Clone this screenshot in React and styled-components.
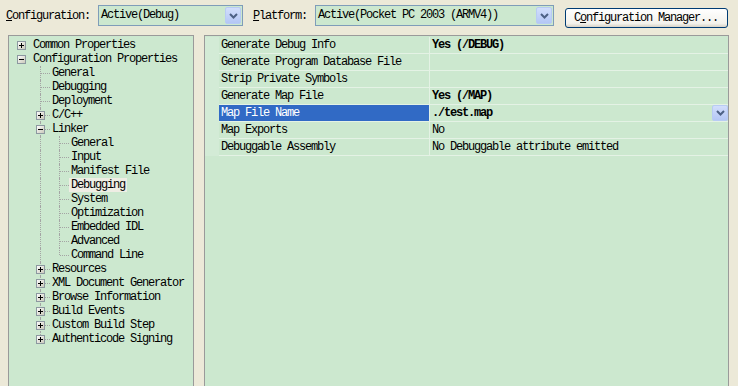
import React from 'react'
import styled, { createGlobalStyle, css } from 'styled-components'

const GlobalStyle = createGlobalStyle`
  html, body { margin: 0; padding: 0; background: #ece9d8; }
  body {
    font-family: "Liberation Mono", "DejaVu Sans Mono", monospace;
    font-size: 12px;
    letter-spacing: -1.2px;
    color: #000;
  }
`

const TREE = [
  { label: 'Common Properties', kids: [] },
  {
    label: 'Configuration Properties',
    open: true,
    kids: [
      { label: 'General' },
      { label: 'Debugging' },
      { label: 'Deployment' },
      { label: 'C/C++', kids: [] },
      {
        label: 'Linker',
        open: true,
        kids: [
          { label: 'General' },
          { label: 'Input' },
          { label: 'Manifest File' },
          { label: 'Debugging', selected: true },
          { label: 'System' },
          { label: 'Optimization' },
          { label: 'Embedded IDL' },
          { label: 'Advanced' },
          { label: 'Command Line' }
        ]
      },
      { label: 'Resources', kids: [] },
      { label: 'XML Document Generator', kids: [] },
      { label: 'Browse Information', kids: [] },
      { label: 'Build Events', kids: [] },
      { label: 'Custom Build Step', kids: [] },
      { label: 'Authenticode Signing', kids: [] }
    ]
  }
]

const PROPS = [
  { name: 'Generate Debug Info', value: 'Yes (/DEBUG)', bold: true },
  { name: 'Generate Program Database File', value: '' },
  { name: 'Strip Private Symbols', value: '' },
  { name: 'Generate Map File', value: 'Yes (/MAP)', bold: true },
  { name: 'Map File Name', value: './test.map', bold: true, selected: true },
  { name: 'Map Exports', value: 'No' },
  { name: 'Debuggable Assembly', value: 'No Debuggable attribute emitted' }
]

function flatten (nodes, level, guides, out = []) {
  nodes.forEach((node, i) => {
    const last = i === nodes.length - 1
    out.push({
      label: node.label,
      level,
      last,
      guides,
      selected: node.selected,
      expander: node.kids ? (node.open ? 'minus' : 'plus') : null
    })
    if (node.open) flatten(node.kids, level + 1, [...guides, level > 0 && !last], out)
  })
  return out
}

const Window = styled.div`
  width: 738px;
  height: 386px;
  overflow: hidden;
  background: #ece9d8;
  display: flex;
  flex-direction: column;
`
const Toolbar = styled.div`
  height: 35px;
  flex-shrink: 0;
  box-sizing: border-box;
  display: flex;
  align-items: flex-start;
  padding: 5px 0 0 6px;
`
const FieldLabel = styled.span`
  margin-top: 4px;
  margin-right: ${p => p.$gap}px;
  line-height: 14px;
  white-space: nowrap;
  u { text-decoration: underline; }
`
const Combo = styled.div`
  width: ${p => p.$width}px;
  height: 21px;
  box-sizing: border-box;
  border: 1px solid #7f9db9;
  background: #cce8cf;
  display: flex;
  align-items: stretch;
  margin-right: ${p => p.$after || 0}px;
`
const ComboText = styled.span`
  flex: 1;
  padding-left: 2px;
  line-height: 19px;
  white-space: nowrap;
  overflow: hidden;
`
const DropButton = styled.span`
  width: ${p => p.$w || 16}px;
  height: ${p => p.$h || 17}px;
  margin: ${p => p.$m ?? 1}px;
  box-sizing: border-box;
  border: 1px solid #b8cbf4;
  border-radius: 2px;
  background: linear-gradient(#d2defc, #b4c7f5);
  display: flex;
  align-items: center;
  justify-content: center;
  flex-shrink: 0;
`
const PushButton = styled.div`
  margin-top: 3px;
  width: 163px;
  height: 20px;
  box-sizing: border-box;
  border: 1px solid #003c74;
  border-radius: 3px;
  background: linear-gradient(#ffffff, #f3f2ec 80%, #d8d2c6);
  padding-left: 8px;
  line-height: 18px;
  white-space: nowrap;
  u { text-decoration: underline; }
`
const Main = styled.div`
  height: 380px;
  flex-shrink: 0;
  display: flex;
  align-items: stretch;
  padding-left: 8px;
  gap: 10px;
`
const TreePanel = styled.div`
  width: 186px;
  box-sizing: border-box;
  border: 1px solid #9a9a9a;
  background: #cce8cf;
  padding-top: 2px;
`
const TreeRow = styled.div`
  display: flex;
  height: 14px;
  padding-left: 3px;
`
const Guide = styled.span`
  position: relative;
  width: 19px;
  height: 14px;
  flex-shrink: 0;
  ${p => p.$line && css`
    &::before {
      content: '';
      position: absolute;
      left: 9px;
      top: 0;
      height: 14px;
      border-left: 1px dotted #a4a4a4;
    }
  `}
`
const Connector = styled.span`
  position: relative;
  width: 19px;
  height: 14px;
  flex-shrink: 0;
  ${p => p.$lines && css`
    &::before {
      content: '';
      position: absolute;
      left: 9px;
      top: 0;
      height: ${p.$last ? 7 : 14}px;
      border-left: 1px dotted #a4a4a4;
    }
    &::after {
      content: '';
      position: absolute;
      left: 10px;
      right: 0;
      top: 7px;
      border-top: 1px dotted #a4a4a4;
    }
  `}
`
const BoxHolder = styled.span`
  position: absolute;
  left: 5px;
  top: 3px;
  width: 9px;
  height: 9px;
  z-index: 1;
  display: block;
  svg { display: block; }
`
const NodeLabel = styled.span`
  padding: 0 2px;
  line-height: 14px;
  white-space: nowrap;
  background: ${p => (p.$selected ? '#efede4' : 'transparent')};
`
const GridPanel = styled.div`
  width: 525px;
  box-sizing: border-box;
  border: 1px solid #9a9a9a;
  background: #cce8cf;
  padding-top: 1px;
`
const PropRow = styled.div`
  display: grid;
  grid-template-columns: 14px 211px 298px;
  height: 17px;
`
const Gutter = styled.span`
  background: #d3ebd6;
`
const NameCell = styled.span`
  box-sizing: border-box;
  border-bottom: 1px solid #e4f2e5;
  border-right: 1px solid #e4f2e5;
  padding-left: 2px;
  line-height: 16px;
  white-space: nowrap;
  background: ${p => (p.$selected ? '#316ac5' : 'transparent')};
  color: ${p => (p.$selected ? '#fff' : '#000')};
`
const ValueCell = styled.span`
  box-sizing: border-box;
  border-bottom: 1px solid #e4f2e5;
  padding-left: 2px;
  line-height: 16px;
  white-space: nowrap;
  display: flex;
  justify-content: space-between;
  font-weight: ${p => (p.$bold ? 700 : 400)};
`

function Chevron () {
  return (
    <svg width='9' height='6' viewBox='0 0 9 6'>
      <path d='M1 1l3.5 3.5L8 1' fill='none' stroke='#4d6185' strokeWidth='2' />
    </svg>
  )
}

function ExpandBox ({ kind }) {
  return (
    <BoxHolder>
      <svg width='9' height='9' viewBox='0 0 9 9'>
        <defs>
          <linearGradient id='boxfill' x1='0' y1='0' x2='1' y2='1'>
            <stop offset='0' stopColor='#ffffff' />
            <stop offset='1' stopColor='#c8c6b6' />
          </linearGradient>
        </defs>
        <rect x='0.5' y='0.5' width='8' height='8' fill='url(#boxfill)' stroke='#8c98a0' />
        <path d='M2 4.5h5' stroke='#000' />
        {kind === 'plus' && <path d='M4.5 2v5' stroke='#000' />}
      </svg>
    </BoxHolder>
  )
}

export default function App () {
  const rows = flatten(TREE, 0, [])
  return (
    <Window>
      <GlobalStyle />
      <Toolbar>
        <FieldLabel $gap={8}><u>C</u>onfiguration:</FieldLabel>
        <Combo $width={145} $after={10}>
          <ComboText>Active(Debug)</ComboText>
          <DropButton><Chevron /></DropButton>
        </Combo>
        <FieldLabel $gap={8}><u>P</u>latform:</FieldLabel>
        <Combo $width={239} $after={11}>
          <ComboText>Active(Pocket PC 2003 (ARMV4))</ComboText>
          <DropButton><Chevron /></DropButton>
        </Combo>
        <PushButton>C<u>o</u>nfiguration Manager...</PushButton>
      </Toolbar>
      <Main>
        <TreePanel>
          {rows.map((r, i) => (
            <TreeRow key={i}>
              {r.guides.map((g, j) => <Guide key={j} $line={g} />)}
              <Connector $lines={r.level > 0} $last={r.last}>
                {r.expander && <ExpandBox kind={r.expander} />}
              </Connector>
              <NodeLabel $selected={r.selected}>{r.label}</NodeLabel>
            </TreeRow>
          ))}
        </TreePanel>
        <GridPanel>
          {PROPS.map(p => (
            <PropRow key={p.name}>
              <Gutter />
              <NameCell $selected={p.selected}>{p.name}</NameCell>
              <ValueCell $bold={p.bold}>
                <span>{p.value}</span>
                {p.selected && <DropButton $m={0} $h={16}><Chevron /></DropButton>}
              </ValueCell>
            </PropRow>
          ))}
        </GridPanel>
      </Main>
    </Window>
  )
}
